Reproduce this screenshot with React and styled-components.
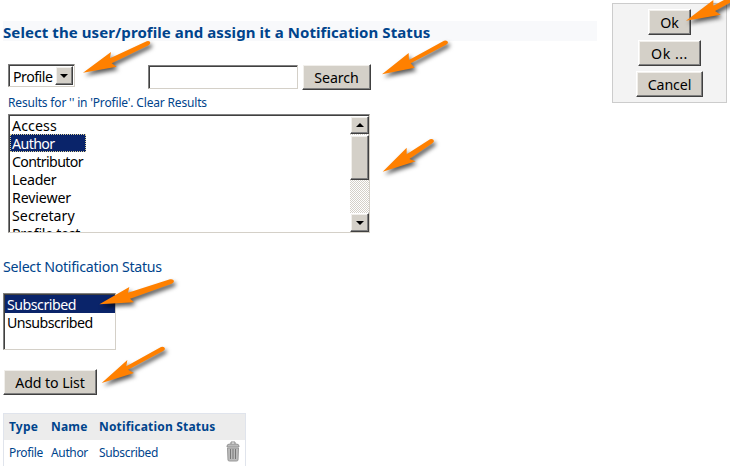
import React from "react";
import styled, { createGlobalStyle, css } from "styled-components";

const Global = createGlobalStyle`
  * { box-sizing: border-box; }
  html, body { margin: 0; background: #fff; overflow: hidden; }
`;

const navy = "#00448c";
const sunken = css`
  border: 1px solid;
  border-color: #808080 #d4d0c8 #d4d0c8 #808080;
  box-shadow: inset 1px 1px 0 #404040;
`;
const raised = css`
  background: #d4d0c8;
  border: 1px solid;
  border-color: #fff #404040 #404040 #fff;
  box-shadow: inset -1px -1px 0 #808080, inset 1px 1px 0 #f1efeb;
`;

const Page = styled.div`
  position: relative;
  width: 730px;
  height: 466px;
  overflow: hidden;
  display: flex;
  align-items: flex-start;
  background: #fff;
  color: #000;
  font: 14.2px/18px "Noto Sans", sans-serif;
  white-space: nowrap;
`;
const Main = styled.main`
  width: 612px;
  padding: 21px 0 0 3px;
  display: flex;
  flex-direction: column;
  align-items: flex-start;
`;
const Heading = styled.h1`
  margin: 0 0 23px;
  width: 594px;
  height: 20px;
  background: #f8f9fb;
  color: ${navy};
  font-size: 15px;
  line-height: 23px;
  letter-spacing: 0.08px;
  font-weight: 700;
`;
const SearchRow = styled.div`
  display: flex;
  align-items: flex-start;
  margin-left: 5px;
  height: 26px;
`;
const Select = styled.div`
  ${sunken}
  width: 67px;
  height: 23px;
  padding: 1px 1px 1px 4px;
  display: flex;
  justify-content: space-between;
  line-height: 22px;
  letter-spacing: -0.5px;
`;
const DropButton = styled.div`
  ${raised}
  width: 18px;
  height: 19px;
  display: grid;
  place-items: center;
`;
const Input = styled.input`
  ${sunken}
  width: 150px;
  height: 24px;
  margin: 1px 4px 0 73px;
  padding: 0 4px;
  outline: 0;
  border-radius: 0;
`;
const Button = styled.button`
  ${raised}
  width: ${(p) => p.$w}px;
  height: 26px;
  padding: 2px 0 0;
  color: #000;
  font: inherit;
  line-height: 22px;
  letter-spacing: ${(p) => p.$ls || 0}px;
`;
const Results = styled.div`
  margin: 4px 0 2px 5px;
  height: 18px;
  color: ${navy};
  font-size: 12px;
  line-height: 18px;
  letter-spacing: -0.17px;
`;
const ListBox = styled.div`
  ${sunken}
  width: ${(p) => p.$w}px;
  height: ${(p) => p.$h}px;
  margin-left: ${(p) => p.$ml || 0}px;
  overflow: hidden;
  display: flex;
  justify-content: space-between;
`;
const Options = styled.div`
  padding: 1px 0 0 1px;
  flex: ${(p) => (p.$wide ? 1 : "0 0 77px")};
`;
const Option = styled.div`
  height: 18px;
  padding: 1px 0 0 2px;
  line-height: 18px;
  letter-spacing: ${(p) => p.$ls || 0}px;
  ${(p) =>
    p.$selected &&
    css`
      background: #0a246a;
      color: #fff;
      outline: ${p.$wide ? "0" : "1px dotted #e0d498"};
      outline-offset: -1px;
    `}
`;
const ScrollBar = styled.div`
  width: 19px;
  margin-top: 1px;
  display: flex;
  flex-direction: column;
  background: repeating-conic-gradient(#fff 0 25%, #d4d0c8 0 50%) 0 0 / 2px 2px;
`;
const ScrollPart = styled.div`
  ${raised}
  height: ${(p) => p.$h}px;
  margin-top: ${(p) => p.$mt || 0}px;
  display: grid;
  place-items: center;
`;
const Triangle = styled.i`
  border: 4px solid transparent;
  border-width: ${(p) => (p.$up ? "0 4px 4px" : "4px 4px 0")};
  border-${(p) => (p.$up ? "bottom" : "top")}-color: #000;
`;
const Label = styled.div`
  margin: 25px 0 17px;
  color: ${navy};
  line-height: 18px;
  letter-spacing: -0.27px;
`;
const AddRow = styled.div`
  margin: 19px 0 18px;
`;
const Table = styled.div`
  width: 243px;
  height: 70px;
  border: 1px solid #e0e4ec;
  color: ${navy};
  font-size: 12px;
`;
const Row = styled.div`
  display: grid;
  grid-template-columns: 42px 48px 126px 20px;
  padding-left: 5px;
  height: ${(p) => (p.$head ? 26 : 40)}px;
  line-height: 26px;
  background: ${(p) => (p.$head ? "#ececec" : "#fff")};
  font-weight: ${(p) => (p.$head ? 700 : 400)};
  letter-spacing: ${(p) => (p.$head ? 0.18 : -0.35)}px;
`;
const Panel = styled.aside`
  width: 115px;
  height: 100px;
  margin-top: 3px;
  padding-top: 5px;
  border: 1px solid #ccc;
  background: #f3f3f3;
  display: flex;
  flex-direction: column;
  align-items: center;
  gap: 5px;
`;
const ArrowSvg = styled.svg`
  position: absolute;
  left: ${(p) => p.$x}px;
  top: ${(p) => p.$y}px;
  width: 80px;
  height: 50px;
  overflow: visible;
  pointer-events: none;
  filter: drop-shadow(2px 3px 2px rgba(0, 0, 0, 0.65));
`;
const Trash = styled.svg`
  width: 14px;
  height: 21px;
  margin: 1px 0 0 1px;
`;

const arrows = [
  [83, 40, "M0 98 84 36 81 55 191 4Q201 1 202 9 201 14 194 17L86 70 101 80Z"],
  [382, 40, "M0 103 80 39 81 60 186 2Q196-1 198 7 198 12 191 15L86 70 98 83Z"],
  [686, 0, "M0 62 82 0 82 17 150-20 150-2 87 33 104 44Z"],
  [382, 138, "M2 101 74 29 74 49 144 4Q154 1 156 9 156 13 149 17L82 63 101 70Z"],
  [99, 278, "M1 79 91 27 87 44 213 4Q223 2 225 9 225 14 218 17L93 62 105 73Z"],
  [102, 346, "M-1 111 76 42 73 61 177 3Q187 0 189 8 189 12 182 16L78 71 96 81Z"],
];

const profiles = [
  ["Access", 0.1],
  ["Author", -0.6],
  ["Contributor", -0.65],
  ["Leader", -0.25],
  ["Reviewer", -0.15],
  ["Secretary", 0.05],
  ["Profile test", -0.3],
];

function TrashIcon() {
  return (
    <Trash viewBox="0 0 14 21">
      <path d="M5 3V1h4v2" fill="none" stroke="#888" />
      <path d="M1 5Q1 3 4 3h6q3 0 3 2v1H1z" fill="#bbb" stroke="#888" strokeWidth=".8" />
      <path d="M1.500 7h11L12 19q0 1-1.500 1h-7Q2 20 2 19z" fill="#bbb" stroke="#999" />
      <path d="M4.500 8v10M7 8v10M9.500 8v10" stroke="#777" strokeWidth="1" />
    </Trash>
  );
}

export default function App() {
  return (
    <Page>
      <Global />
      <Main>
        <Heading>Select the user/profile and assign it a Notification Status</Heading>
        <SearchRow>
          <Select>
            Profile
            <DropButton><Triangle /></DropButton>
          </Select>
          <Input aria-label="Search text" />
          <Button $w={69} $ls={-0.1}>Search</Button>
        </SearchRow>
        <Results>Results for '' in 'Profile'. Clear Results</Results>
        <ListBox $w={362} $h={119} $ml={5}>
          <Options>
            {profiles.map(([name, spacing]) => (
              <Option key={name} $ls={spacing} $selected={name === "Author"}>{name}</Option>
            ))}
          </Options>
          <ScrollBar>
            <ScrollPart $h={18}><Triangle $up /></ScrollPart>
            <ScrollPart $h={45} $mt={1} />
            <ScrollPart $h={19} $mt={33}><Triangle /></ScrollPart>
          </ScrollBar>
        </ListBox>
        <Label>Select Notification Status</Label>
        <ListBox $w={113} $h={57}>
          <Options $wide>
            <Option $wide $selected $ls={-0.5}>Subscribed</Option>
            <Option $wide $ls={-0.53}>Unsubscribed</Option>
          </Options>
        </ListBox>
        <AddRow><Button $w={94} $ls={-0.1}>Add to List</Button></AddRow>
        <Table>
          <Row $head><span>Type</span><span>Name</span><span>Notification Status</span></Row>
          <Row><span>Profile</span><span>Author</span><span>Subscribed</span><TrashIcon /></Row>
        </Table>
      </Main>
      <Panel>
        <Button $w={43}>Ok</Button>
        <Button $w={63} $ls={0.5}>Ok ...</Button>
        <Button $w={67} $ls={-0.1}>Cancel</Button>
      </Panel>
      {arrows.map(([x, y, d]) => (
        <ArrowSvg key={d} $x={x} $y={y} viewBox="0 0 240 150">
          <path d={d} fill="#ff8000" />
        </ArrowSvg>
      ))}
    </Page>
  );
}
